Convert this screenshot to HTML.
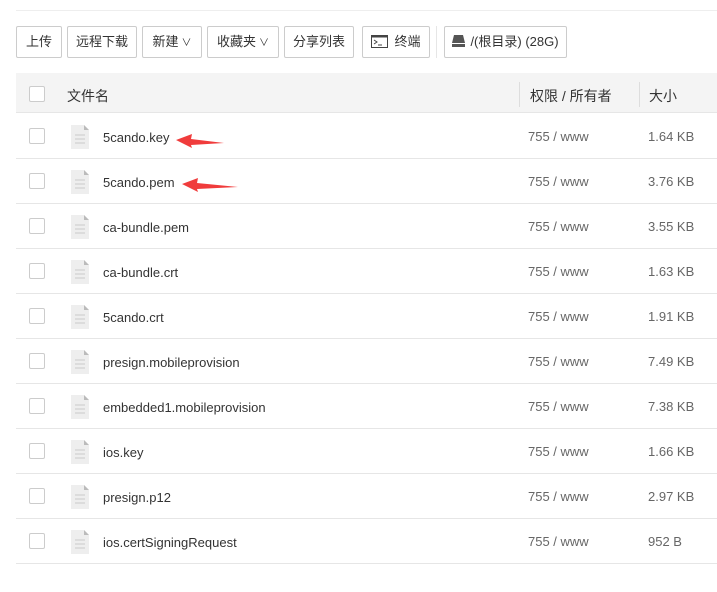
<!DOCTYPE html><html><head><meta charset="utf-8"><style>
*{margin:0;padding:0;box-sizing:border-box}
body{width:717px;height:592px;background:#fff;font-family:"Liberation Sans","Noto Sans CJK SC",sans-serif;font-size:13px;color:#333;position:relative;overflow:hidden}
.topline{position:absolute;left:16px;right:0;top:10px;height:1px;background:#eee}
.btn{position:absolute;top:26px;height:32px;border:1px solid #ccc;border-radius:2px;background:#fff;font-size:13px;color:#333;line-height:30px;text-align:center;white-space:nowrap}
.hdr{position:absolute;left:16px;right:0;top:73px;height:40px;background:#f4f4f4;border-bottom:1px solid #e6e6e6}
.cb{position:absolute;width:16px;height:16px;border:1px solid #ccc;border-radius:2px;background:#fff;left:29px}
.row{position:absolute;left:16px;right:0;height:45px;border-bottom:1px solid #e6e6e6}
.t{position:absolute;white-space:nowrap;line-height:16px}
.g{color:#666}
.sep{position:absolute;top:82px;width:1px;height:25px;background:#ddd}
</style></head><body>
<div class="topline"></div>
<div class="btn" style="left:16px;width:46px">上传</div>
<div class="btn" style="left:67px;width:70px">远程下载</div>
<div class="btn" style="left:142px;width:60px">新建<span style="font-size:10px;margin-left:3px">&#8744;</span></div>
<div class="btn" style="left:207px;width:72px">收藏夹<span style="font-size:10px;margin-left:3px">&#8744;</span></div>
<div class="btn" style="left:284px;width:70px">分享列表</div>
<div class="btn" style="left:362px;width:68px"><svg width="17" height="13" viewBox="0 0 17 13" style="vertical-align:-2px;margin-right:6px"><rect x="0.5" y="0.5" width="16" height="12" fill="#fff" stroke="#444"/><rect x="0.5" y="0.5" width="16" height="2" fill="#444"/><path d="M3 5l3 2-3 2M7 10h4" stroke="#444" fill="none"/></svg>终端</div>
<div style="position:absolute;left:436px;top:26px;width:1px;height:32px;background:#e6e6e6"></div>
<div class="btn" style="left:444px;width:123px"><svg width="13" height="12" viewBox="0 0 13 12" style="vertical-align:-1px;margin-right:5px"><path d="M2 0h9l2 8H0z" fill="#555"/><rect x="0" y="9" width="13" height="3" fill="#555"/></svg>/(根目录) (28G)</div>
<div class="hdr"></div>
<div class="cb" style="top:86px"></div>
<div class="t" style="left:67px;top:88px;font-size:14px">文件名</div>
<div class="sep" style="left:519px"></div>
<div class="t" style="left:530px;top:88px;font-size:14px">权限 / 所有者</div>
<div class="sep" style="left:639px"></div>
<div class="t" style="left:649px;top:88px;font-size:14px">大小</div>
<div id="rows"></div>
<script>
var d=[["5cando.key","1.64 KB"],["5cando.pem","3.76 KB"],["ca-bundle.pem","3.55 KB"],["ca-bundle.crt","1.63 KB"],["5cando.crt","1.91 KB"],["presign.mobileprovision","7.49 KB"],["embedded1.mobileprovision","7.38 KB"],["ios.key","1.66 KB"],["presign.p12","2.97 KB"],["ios.certSigningRequest","952 B"]];
var h="";
d.forEach(function(r,i){var y=114+i*45;
h+='<div class="row" style="top:'+y+'px"></div>';
h+='<div class="cb" style="top:'+(y+14)+'px"></div>';
h+='<svg style="position:absolute;left:71px;top:'+(y+11)+'px" width="18" height="24" viewBox="0 0 18 24"><path d="M0 0h13l5 5v19H0z" fill="#eee"/><path d="M13 0l5 5h-5z" fill="#bbb"/><path d="M4 10h10M4 14h10M4 18h10" stroke="#d6d6d6" stroke-width="1.5"/></svg>';
h+='<div class="t" style="left:103px;top:'+(y+16)+'px">'+r[0]+'</div>';
h+='<div class="t g" style="left:528px;top:'+(y+15)+'px">755 / www</div>';
h+='<div class="t g" style="left:648px;top:'+(y+15)+'px">'+r[1]+'</div>';
});
document.getElementById("rows").innerHTML=h;
</script>
<svg style="position:absolute;left:0;top:0" width="717" height="592"><polygon points="176,140 192,134 191,139 224,143 191,145 192,148" fill="#f03c3c"/><polygon points="182,184 198,178 197,183 238,187 197,189 198,192" fill="#f03c3c"/></svg>
</body></html>
